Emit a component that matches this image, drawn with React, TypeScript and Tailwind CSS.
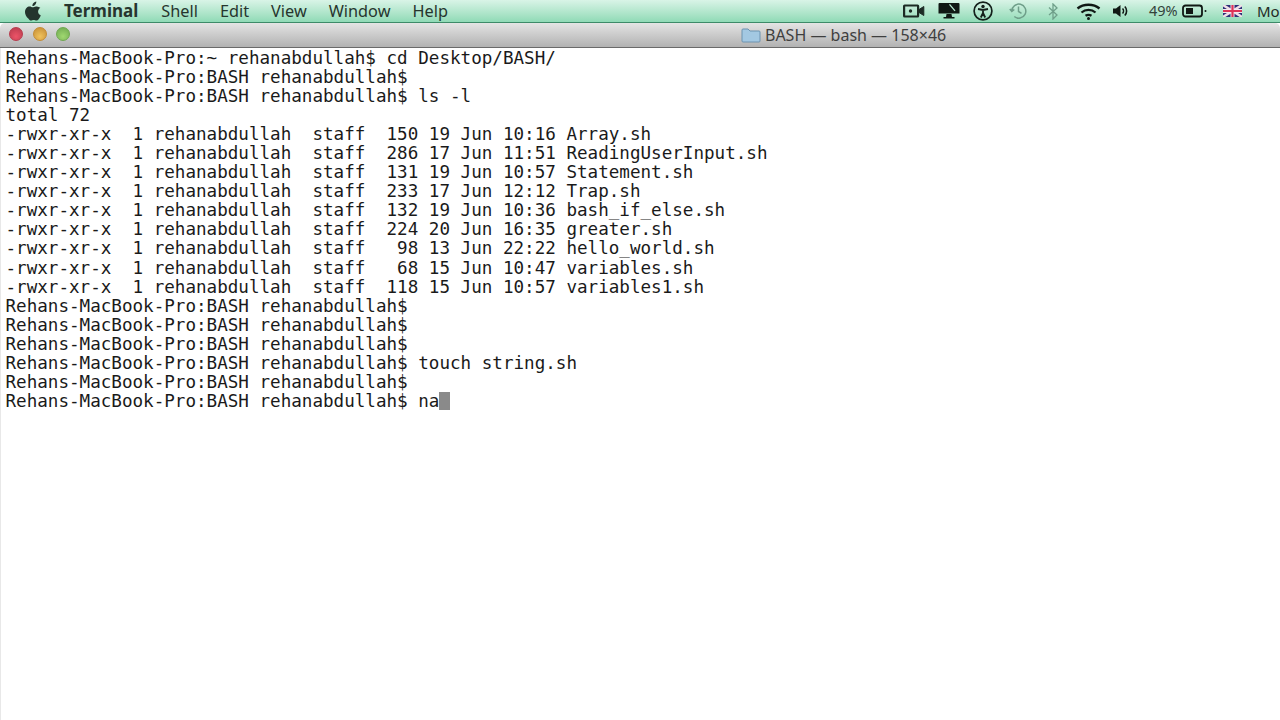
import React from "react";

const lines = [
  "Rehans-MacBook-Pro:~ rehanabdullah$ cd Desktop/BASH/",
  "Rehans-MacBook-Pro:BASH rehanabdullah$",
  "Rehans-MacBook-Pro:BASH rehanabdullah$ ls -l",
  "total 72",
  "-rwxr-xr-x  1 rehanabdullah  staff  150 19 Jun 10:16 Array.sh",
  "-rwxr-xr-x  1 rehanabdullah  staff  286 17 Jun 11:51 ReadingUserInput.sh",
  "-rwxr-xr-x  1 rehanabdullah  staff  131 19 Jun 10:57 Statement.sh",
  "-rwxr-xr-x  1 rehanabdullah  staff  233 17 Jun 12:12 Trap.sh",
  "-rwxr-xr-x  1 rehanabdullah  staff  132 19 Jun 10:36 bash_if_else.sh",
  "-rwxr-xr-x  1 rehanabdullah  staff  224 20 Jun 16:35 greater.sh",
  "-rwxr-xr-x  1 rehanabdullah  staff   98 13 Jun 22:22 hello_world.sh",
  "-rwxr-xr-x  1 rehanabdullah  staff   68 15 Jun 10:47 variables.sh",
  "-rwxr-xr-x  1 rehanabdullah  staff  118 15 Jun 10:57 variables1.sh",
  "Rehans-MacBook-Pro:BASH rehanabdullah$",
  "Rehans-MacBook-Pro:BASH rehanabdullah$",
  "Rehans-MacBook-Pro:BASH rehanabdullah$",
  "Rehans-MacBook-Pro:BASH rehanabdullah$ touch string.sh",
  "Rehans-MacBook-Pro:BASH rehanabdullah$",
];

const Apple = () => (
  <svg width="18" height="20" viewBox="0 0 18 20" className="ml-6 mb-[1px] shrink-0" fill="#24342d">
    <path d="M12.300 0.500c.1 1.300-.4 2.400-1.100 3.200-.7.8-1.800 1.400-2.800 1.300-.1-1.200.4-2.400 1.100-3.100C10.200 1.100 11.300.6 12.300.5zM16.400 6.800c-.2.1-2.300 1.300-2.300 3.700 0 2.800 2.500 3.800 2.700 3.800-.3 1-1 2.300-1.800 3.400-.7 1-1.500 1.900-2.600 1.900s-1.500-.6-2.700-.6c-1.300 0-1.700.6-2.700.6-1.100 0-1.900-1-2.700-2.100C2.300 16 1 13.300 1 11c0-3.500 2.400-5.500 4.700-5.500 1.200 0 2.200.8 3 .8s1.900-.9 3.300-.9c.6 0 2.900.1 4.400 1.400z" />
  </svg>
);

const Dot = ({ c, b }: { c: string; b: string }) => (
  <span className="w-[14px] h-[14px] rounded-full border" style={{ background: `radial-gradient(circle at 50% 70%, ${c}, ${b})`, borderColor: b }} />
);

export default function App() {
  return (
    <div className="w-[1280px] h-[720px] overflow-hidden bg-white flex flex-col font-['Noto_Sans','Liberation_Sans',sans-serif]">
      <div className="h-[23px] shrink-0 flex items-center bg-gradient-to-b from-[#d9f4e7] to-[#8fdab6] border-b border-[#3d8a68] text-[#26352e] text-[16.300px] relative">
        <Apple />
        <span className="ml-[22px] font-bold text-[17px]">Terminal</span>
        <span className="ml-[23px]">Shell</span>
        <span className="ml-[22px]">Edit</span>
        <span className="ml-[22px]">View</span>
        <span className="ml-[22px]">Window</span>
        <span className="ml-[22px]">Help</span>
        <div className="ml-auto flex items-center text-[#1f2a25]">
          <svg width="22" height="14" viewBox="0 0 22 14" fill="none" stroke="#1c2a24" strokeWidth="2.200" className="shrink-0">
            <rect x="1.100" y="1.500" width="14" height="11" rx="0.500" />
            <path d="M16 5.500l4.800-3v9L16 8.500z" fill="#1c2a24" strokeWidth="1" />
            <circle cx="7.500" cy="7" r="1.700" fill="#1c2a24" stroke="none" />
          </svg>
          <svg width="22" height="16" viewBox="0 0 22 16" className="ml-[13px] shrink-0" fill="#101814">
            <path d="M1.500 0h19a1 1 0 0 1 1 1v9.500H.5V1a1 1 0 0 1 1-1zM8.500 11h5l.5 3h2.500v1.500h-11V14H8z" />
            <path d="M12 1l5.500 6.500-1 .7L11 1.800z" fill="#b9ead2" />
          </svg>
          <svg width="20" height="20" viewBox="0 0 20 20" className="ml-[13px] shrink-0" fill="none" stroke="#14201b" strokeWidth="1.700">
            <circle cx="10" cy="10" r="8.900" />
            <circle cx="10" cy="5.500" r="1.700" fill="#14201b" stroke="none" />
            <path d="M5 8l5 1 5-1M10 9v3.500M10 12l-2.200 4.500M10 12l2.200 4.500" strokeWidth="1.800" />
          </svg>
          <svg width="18" height="18" viewBox="0 0 18 18" className="ml-[16px] shrink-0" fill="none" stroke="#6f9f8a" strokeWidth="1.500">
            <path d="M2.800 9a7 7 0 1 1 2.500 5.500M.8 7l2 2.500L5.300 7.500M9.500 4.500V9.500l3 1.800" />
          </svg>
          <svg width="10" height="17" viewBox="0 0 10 17" className="ml-[21px] shrink-0" fill="none" stroke="#6f9f8a" strokeWidth="1.300">
            <path d="M1 4.500l8 7.500-4 4V1l4 4-8 7" />
          </svg>
          <svg width="25" height="17" viewBox="0 0 25 17" className="ml-[18px] shrink-0" fill="none" stroke="#101814" strokeWidth="2.300">
            <path d="M1.500 5.500c6-5 16-5 22 0M5.500 9.500c4-3.500 10-3.500 14 0M9.500 12.800c2-1.200 4-1.200 6 0" />
            <circle cx="12.500" cy="15.500" r="1.500" fill="#101814" stroke="none" />
          </svg>
          <svg width="15" height="14" viewBox="0 0 15 14" className="ml-[12px] shrink-0" fill="#101814">
            <path d="M0 4.500h3L7.500 1v12L3 9.500H0z" />
            <path d="M9.500 4.500c1.300 1.300 1.300 3.700 0 5M11.800 2.500c2.400 2.400 2.400 6.600 0 9" fill="none" stroke="#101814" strokeWidth="1.600" />
          </svg>
          <span className="ml-[21px] text-[14.500px] text-[#33433c] w-[27px] whitespace-nowrap">49%</span>
          <svg width="25" height="14" viewBox="0 0 25 14" className="ml-[6px] shrink-0" fill="none" stroke="#101814" strokeWidth="1.800">
            <rect x="1" y="1.500" width="19" height="11" rx="2.500" />
            <rect x="4" y="4" width="7" height="6" fill="#101814" stroke="none" />
            <circle cx="23.500" cy="7" r="1" fill="#101814" stroke="none" />
          </svg>
          <svg width="19" height="12" viewBox="0 0 19 12" className="ml-[16px] shrink-0">
            <rect width="19" height="12" fill="#2e2f78" />
            <path d="M0 0l19 12M19 0L0 12" stroke="#f0dfe6" strokeWidth="2.500" />
            <path d="M9.500 0v12M0 6h19" stroke="#f2e8ee" strokeWidth="4" />
            <path d="M9.500 0v12M0 6h19" stroke="#dd3358" strokeWidth="2.200" />
          </svg>
          <span className="ml-[15px] w-[23px] text-[15px] whitespace-nowrap">Mo</span>
        </div>
      </div>
      <div className="h-[25px] shrink-0 relative flex items-center pl-[741px] bg-gradient-to-b from-[#e4e4e4] to-[#b2b2b2] border-b border-[#6a6a6a] rounded-t-[5px]">
        <div className="absolute left-[9px] top-[4px] flex gap-[9.500px]">
          <Dot c="#ec5468" b="#b73a4c" />
          <Dot c="#f0c25c" b="#c48c34" />
          <Dot c="#a0d870" b="#6fa850" />
        </div>
        <div className="flex items-center gap-[4px] text-[16px] text-[#3f3f3f]">
          <svg width="20" height="16" viewBox="0 0 20 16" className="shrink-0">
            <path d="M1 3a1 1 0 0 1 1-1h5l2 2h9a1 1 0 0 1 1 1v9a1 1 0 0 1-1 1H2a1 1 0 0 1-1-1z" fill="#a3c8e2" stroke="#6c93b0" />
          </svg>
          <span>BASH — bash — 158×46</span>
        </div>
      </div>
      <div className="flex-1 pl-[4.500px] pt-[1px] font-['DejaVu_Sans_Mono','Liberation_Mono',monospace] text-[17.580px] leading-[19.060px] text-[#1a1a1a] whitespace-pre border-l border-[#e8e8e8]">
        {lines.map((l, i) => (
          <div key={i} className="h-[19.060px]">{l}</div>
        ))}
        <div className="h-[19.060px] flex items-center">
          <span>Rehans-MacBook-Pro:BASH rehanabdullah$ na</span>
          <span className="w-[11px] h-[18px] bg-[#8a8a8a]" />
        </div>
      </div>
    </div>
  );
}
